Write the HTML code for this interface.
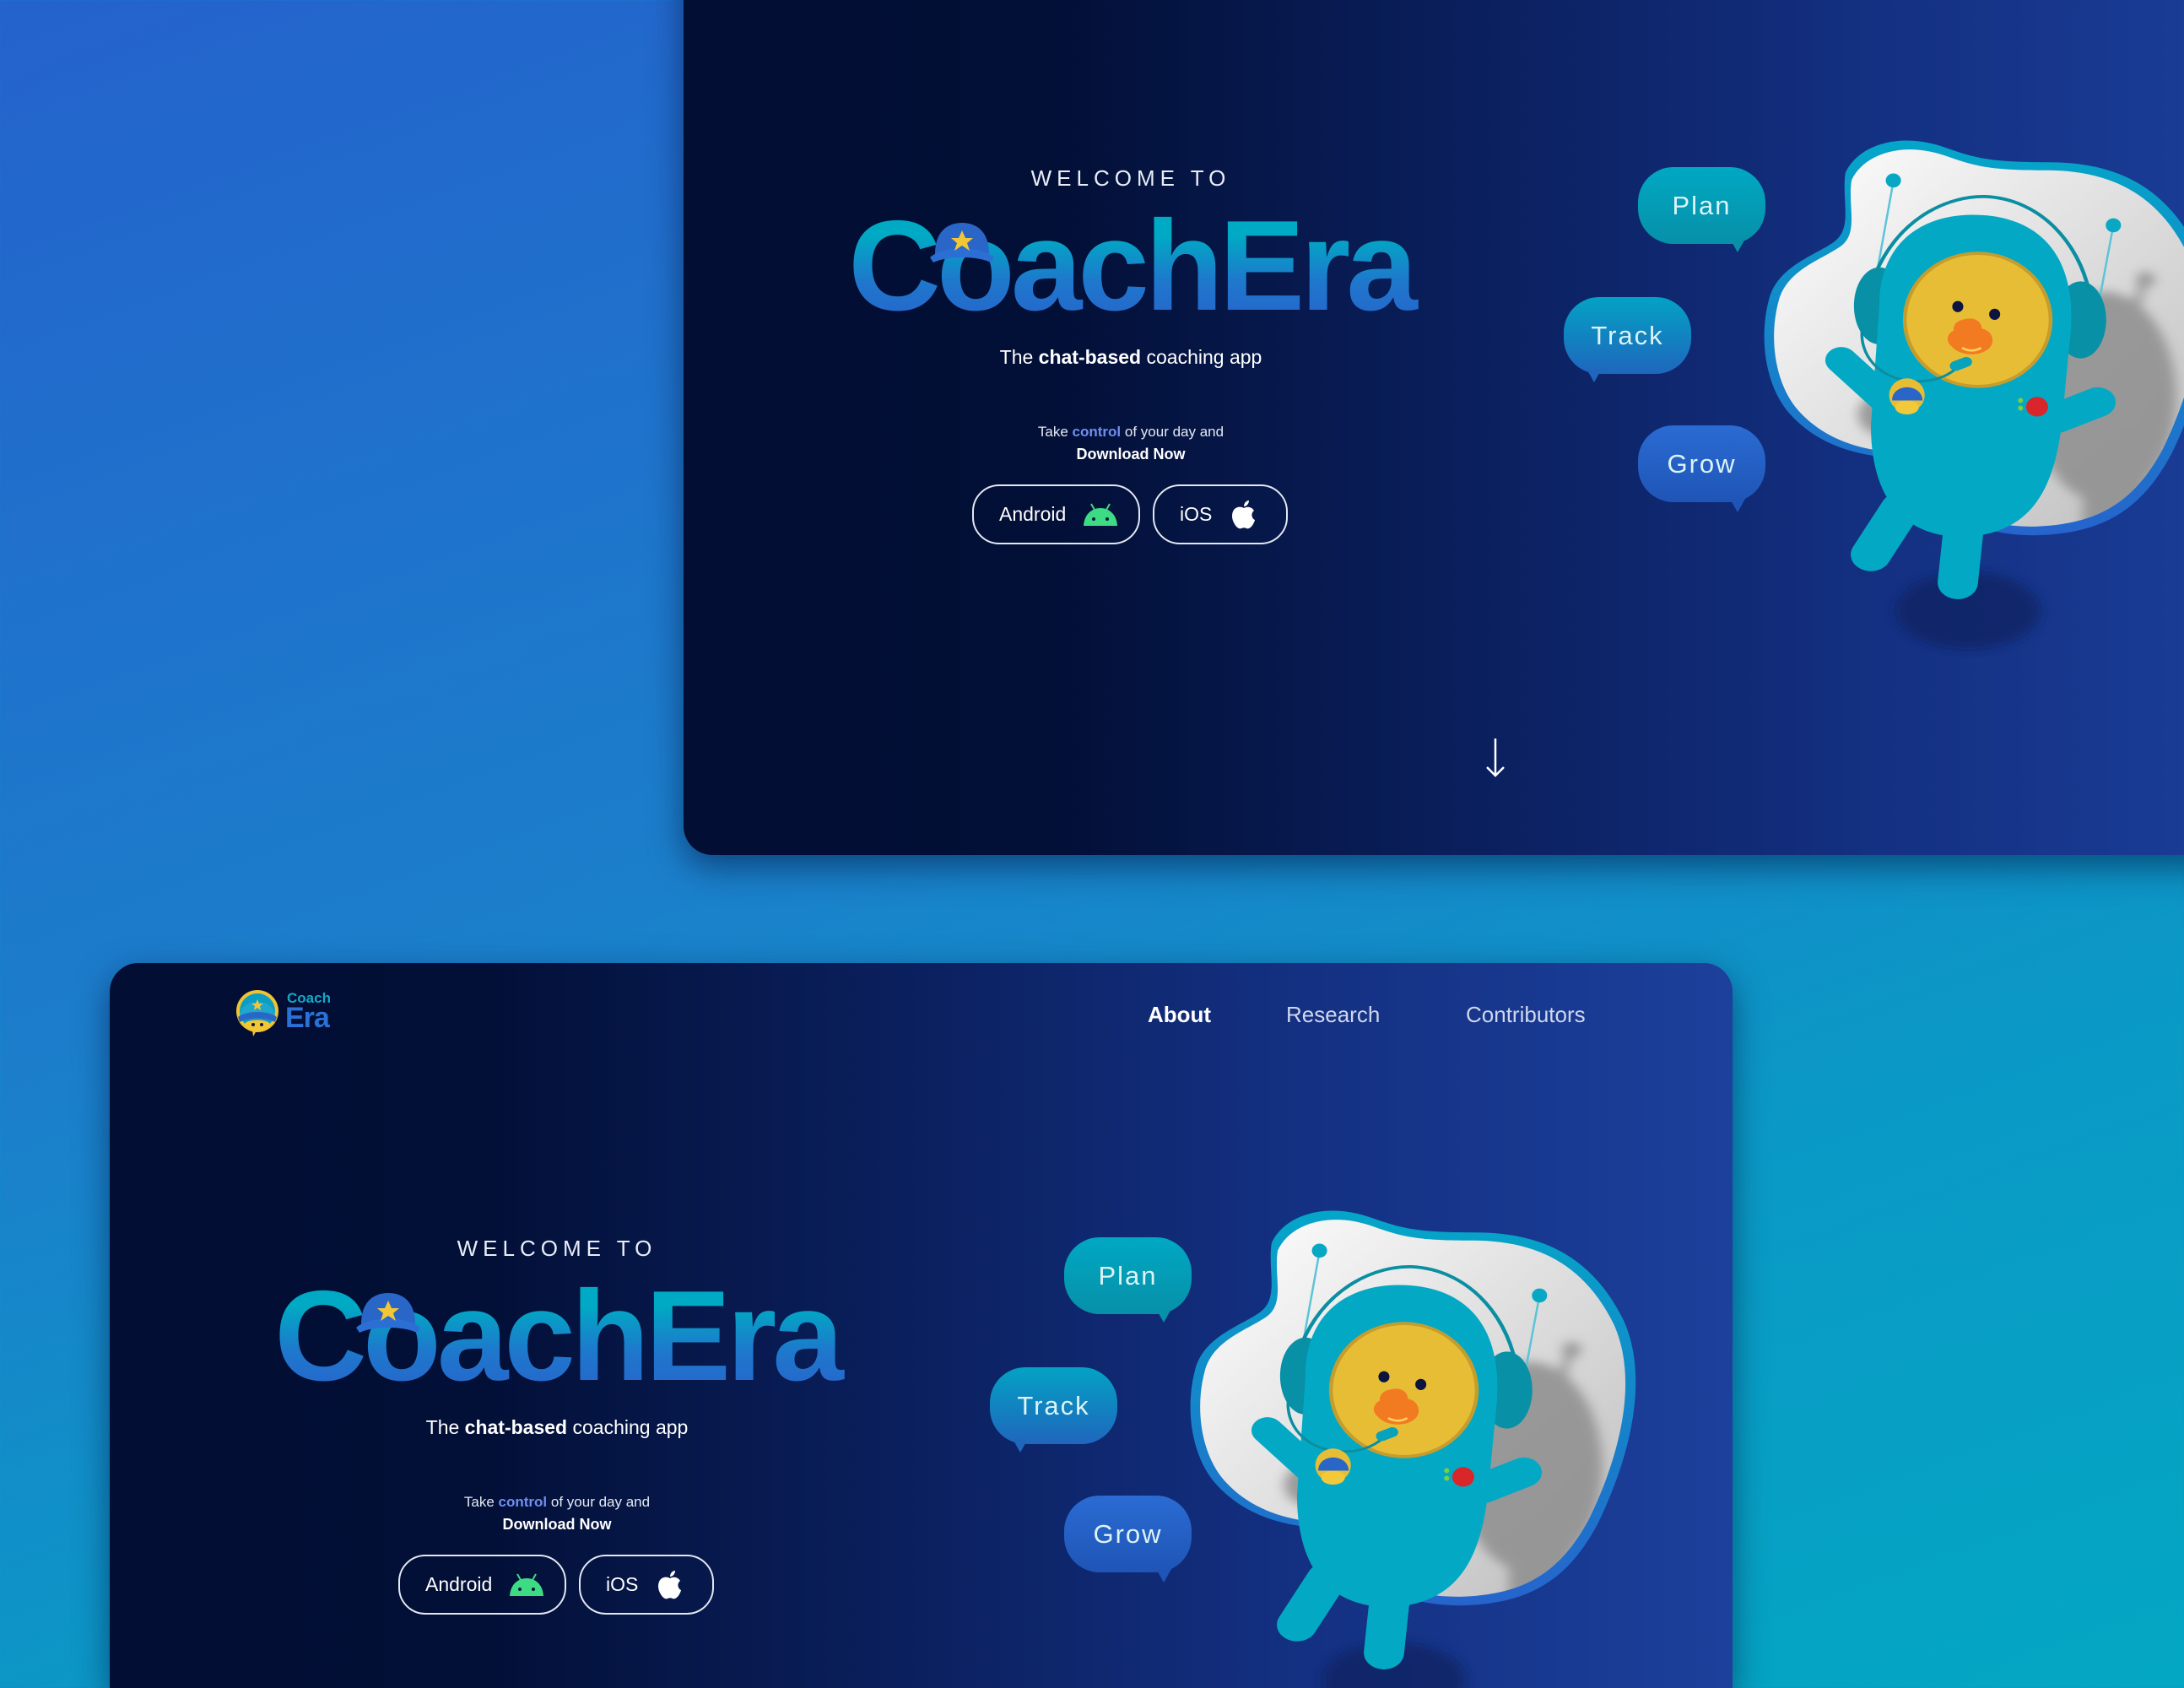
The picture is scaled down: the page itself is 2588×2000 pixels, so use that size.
<!DOCTYPE html>
<html><head><meta charset="utf-8">
<style>
*{margin:0;padding:0;box-sizing:border-box}
html{width:2588px;height:2000px;overflow:hidden}
body{width:2588px;height:2000px;overflow:hidden;position:relative;font-family:"Liberation Sans",sans-serif;
background:linear-gradient(160deg,#2462cc 0%,#1b7fcb 45%,#0b98c6 70%,#03a7c3 100%);}
.card{position:absolute;width:1923px;height:1140px;border-radius:34px;overflow:hidden;
background:linear-gradient(90deg,#020e33 0%,#020f36 22%,#0a1f5c 48%,#132f80 72%,#1c409c 100%);
box-shadow:0 14px 40px rgba(0,20,60,.55);}
.abs{position:absolute}
.c{position:absolute;text-align:center;white-space:nowrap;color:#fff}
.welcome{left:330px;width:400px;top:320px;font-size:26px;letter-spacing:6px;color:#e9edf7;line-height:36px}
.brand{left:130px;width:800px;top:352px;font-size:152px;font-weight:bold;letter-spacing:-5px;line-height:180px;
background:linear-gradient(180deg,#00aac4 30%,#1e78cc 60%,#2a5ccb 100%);-webkit-background-clip:text;background-clip:text;color:transparent}
.tag{left:230px;width:600px;top:536px;font-size:23px;line-height:28px}
.take{left:230px;width:600px;top:628px;font-size:17px;line-height:22px;color:#e5e9f3}
.take b{color:#6f8ff2}
.dl{left:230px;width:600px;top:654px;font-size:18px;font-weight:bold;line-height:22px}
.btn{position:absolute;top:701px;height:71px;border:2px solid #e4e8f2;border-radius:32px;color:#fff;font-size:23px;display:flex;align-items:center}
.bub{position:absolute;width:151px;height:91px;border-radius:42px;color:#dcf3f7;font-size:31px;letter-spacing:2px;display:flex;align-items:center;justify-content:center}
.nav{position:absolute;top:46px;font-size:26px;color:#cfd6ee;line-height:30px}
</style></head><body>

<!-- TOP CARD -->
<div class="card" style="left:810px;top:-127px;">
  <div class="c welcome">WELCOME TO</div>
  <div class="c brand">CoachEra</div>
  <svg class="abs" style="left:292px;top:388px" width="76" height="62" viewBox="0 0 76 62"><path d="M6 40 C6 12 22 3 38 3 C56 3 70 14 70 40 Z" fill="#2a66c8"/><path d="M0 44 C16 30 60 30 76 44 L72 50 C56 42 20 42 4 50Z" fill="#2c6fd4"/><polygon points="38,12 42,21 51,21 44,27 47,36 38,30 29,36 32,27 25,21 34,21" fill="#f3c635"/></svg>
  <div class="c tag">The <b>chat-based</b> coaching app</div>
  <div class="c take">Take <b>control</b> of your day and</div>
  <div class="c dl">Download Now</div>
  <div class="btn" style="left:342px;width:199px"><span style="margin-left:30px">Android</span>
    <svg style="margin-left:20px" width="42" height="28" viewBox="0 0 42 28"><line x1="10" y1="1" x2="14" y2="8" stroke="#3ddc84" stroke-width="2"/><line x1="32" y1="1" x2="28" y2="8" stroke="#3ddc84" stroke-width="2"/><path d="M1 27 C2 12 12 6 21 6 C30 6 40 12 41 27Z" fill="#3ddc84"/><circle cx="13" cy="19" r="2" fill="#0a1640"/><circle cx="29" cy="19" r="2" fill="#0a1640"/></svg></div>
  <div class="btn" style="left:556px;width:160px"><span style="margin-left:30px">iOS</span>
    <svg style="margin-left:22px" width="32" height="36" viewBox="0 0 32 36"><path d="M16 10 C13 8 8 8 5 11 C1 15 1 23 5 29 C8 34 11 35 13 34 C15 33 17 33 19 34 C21 35 24 34 27 29 C28 27 29 25 29 24 C25 22 24 16 28 13 C25 8 19 8 16 10Z" fill="#fff"/><path d="M16 8 C16 4 19 1 22 1 C22 5 19 8 16 8Z" fill="#fff"/></svg></div>
  <svg class="abs" style="left:950px;top:1000px" width="24" height="50" viewBox="0 0 24 50"><line x1="12" y1="2" x2="12" y2="46" stroke="#fff" stroke-width="2.5"/><polyline points="2,36 12,46 22,36" fill="none" stroke="#fff" stroke-width="2.5"/></svg>
  <div class="bub" style="left:1131px;top:325px;background:linear-gradient(180deg,#00a8c3,#0790a8)">Plan</div>
  <svg class="abs" style="left:1240px;top:410px" width="18" height="16"><polygon points="0,0 18,0 9,16" fill="#0790a8"/></svg>
  <div class="bub" style="left:1043px;top:479px;background:linear-gradient(180deg,#03a2c4,#1f66bd)">Track</div>
  <svg class="abs" style="left:1070px;top:564px" width="18" height="16"><polygon points="0,0 18,0 9,16" fill="#1f66bd"/></svg>
  <div class="bub" style="left:1131px;top:631px;background:linear-gradient(180deg,#2a6bd3,#1f55b6)">Grow</div>
  <svg class="abs" style="left:1240px;top:718px" width="18" height="16"><polygon points="0,0 18,0 9,16" fill="#1f55b6"/></svg>
  <svg class="abs mascot" style="left:990px;top:257px" width="854" height="664" viewBox="0 0 1700 1600" preserveAspectRatio="none">
    <defs>
      <linearGradient id="bl" x1="0" y1="0" x2="0" y2="1"><stop offset="0" stop-color="#04a6c8"/><stop offset="1" stop-color="#2664cc"/></linearGradient>
      <linearGradient id="wh" x1="0" y1="0" x2="1" y2="1"><stop offset="0" stop-color="#ffffff"/><stop offset="1" stop-color="#bdbdbd"/></linearGradient>
      <filter id="bf"><feGaussianBlur stdDeviation="14"/></filter>
      <clipPath id="cp"><path transform="translate(1090 660) scale(0.955) translate(-1090 -660)" d="M770 180 C800 100 900 60 1010 110 C1080 140 1120 150 1250 150 C1420 150 1530 230 1600 400 C1660 560 1620 780 1540 980 C1470 1140 1380 1210 1220 1215 C1120 1215 1050 1190 950 1100 L850 990 C780 980 700 950 640 870 C580 790 565 650 590 540 C610 450 690 420 740 380 C790 340 760 260 770 180Z"/></clipPath>
    </defs>
    <ellipse cx="1060" cy="1430" rx="170" ry="110" fill="#0a1a55" opacity=".55" filter="url(#bf)"/>
    <path d="M770 180 C800 100 900 60 1010 110 C1080 140 1120 150 1250 150 C1420 150 1530 230 1600 400 C1660 560 1620 780 1540 980 C1470 1140 1380 1210 1220 1215 C1120 1215 1050 1190 950 1100 L850 990 C780 980 700 950 640 870 C580 790 565 650 590 540 C610 450 690 420 740 380 C790 340 760 260 770 180Z" fill="url(#bl)"/>
    <path transform="translate(1090 660) scale(0.955) translate(-1090 -660)" d="M770 180 C800 100 900 60 1010 110 C1080 140 1120 150 1250 150 C1420 150 1530 230 1600 400 C1660 560 1620 780 1540 980 C1470 1140 1380 1210 1220 1215 C1120 1215 1050 1190 950 1100 L850 990 C780 980 700 950 640 870 C580 790 565 650 590 540 C610 450 690 420 740 380 C790 340 760 260 770 180Z" fill="url(#wh)"/>
    <g clip-path="url(#cp)" fill="#8e8e8e" opacity=".85" filter="url(#bf)">
      <ellipse cx="1380" cy="820" rx="170" ry="300"/>
      <rect x="1330" y="950" width="150" height="320" rx="60"/>
      <line x1="1475" y1="480" x2="1420" y2="720" stroke="#8e8e8e" stroke-width="18"/>
      <circle cx="1478" cy="485" r="22"/>
      <ellipse cx="860" cy="870" rx="60" ry="60"/>
    </g>
    <line x1="883" y1="205" x2="845" y2="460" stroke="#5cc4d8" stroke-width="5"/>
    <ellipse cx="883" cy="202" rx="18" ry="20" fill="#08a8c4"/>
    <line x1="1402" y1="330" x2="1365" y2="570" stroke="#5cc4d8" stroke-width="5"/>
    <ellipse cx="1402" cy="330" rx="18" ry="20" fill="#08a8c4"/>
    <line x1="760" y1="715" x2="860" y2="825" stroke="#03a9c4" stroke-width="75" stroke-linecap="round"/>
    <line x1="1270" y1="880" x2="1365" y2="835" stroke="#03a9c4" stroke-width="85" stroke-linecap="round"/>
    <line x1="900" y1="1140" x2="830" y2="1270" stroke="#03a9c4" stroke-width="95" stroke-linecap="round"/>
    <line x1="1050" y1="1180" x2="1035" y2="1350" stroke="#03a9c4" stroke-width="95" stroke-linecap="round"/>
    <ellipse cx="850" cy="560" rx="60" ry="110" fill="#0890a6"/>
    <ellipse cx="1325" cy="600" rx="60" ry="110" fill="#0890a6"/>
    <path d="M850 560 C850 380 950 300 1070 300 C1230 300 1320 420 1300 650 L1280 900 C1260 1100 1200 1210 1050 1220 C900 1220 830 1100 830 900Z" fill="#03a9c4"/>
    <path d="M840 470 C900 300 1020 245 1100 248 C1230 255 1320 380 1345 520" fill="none" stroke="#0a8ea2" stroke-width="9"/>
    <ellipse cx="1082" cy="600" rx="172" ry="190" fill="#e8bd36" stroke="#c69d2c" stroke-width="9"/>
    <ellipse cx="1035" cy="562" rx="13" ry="16" fill="#0b1540"/>
    <ellipse cx="1122" cy="584" rx="13" ry="16" fill="#0b1540"/>
    <path d="M1045 600 C1070 590 1090 600 1092 625 C1115 630 1125 660 1110 680 C1090 705 1040 705 1020 675 C1005 660 1010 640 1025 630 C1025 615 1030 605 1045 600Z" fill="#f27b22"/>
    <path d="M1045 680 Q1068 695 1090 680" fill="none" stroke="#ffd35a" stroke-width="6"/>
    <path d="M810 620 C800 700 850 770 930 775 C980 778 1010 760 1030 740" fill="none" stroke="#0a8ea2" stroke-width="7"/>
    <rect x="1015" y="712" width="55" height="28" rx="14" fill="#07a2bc" transform="rotate(-25 1042 726)"/>
    <ellipse cx="915" cy="815" rx="42" ry="48" fill="#e8bd36"/>
    <path d="M880 830 C880 780 950 780 952 830Z" fill="#2a66c8"/>
    <ellipse cx="915" cy="850" rx="28" ry="20" fill="#f2c93a"/>
    <ellipse cx="1222" cy="848" rx="26" ry="28" fill="#d8262b"/>
    <ellipse cx="1183" cy="830" rx="6" ry="7" fill="#7bd13b"/>
    <ellipse cx="1183" cy="852" rx="6" ry="7" fill="#7bd13b"/>
  </svg>
</div>

<!-- BOTTOM CARD -->
<div class="card" style="left:130px;top:1141px;height:859px;border-bottom-left-radius:0;border-bottom-right-radius:0;">
  <svg class="abs" style="left:148px;top:30px" width="56" height="58" viewBox="0 0 56 58"><circle cx="27" cy="27" r="25" fill="#f1c232"/><circle cx="27" cy="27" r="21" fill="#0a9ec4"/><path d="M6 34 C6 10 48 10 48 34Z" fill="#1ea6cc"/><path d="M4 34 C14 26 40 26 50 34 L48 40 C36 34 18 34 6 40Z" fill="#2a66c8"/><polygon points="27,13 29,18 34,18 30,21 31,26 27,23 23,26 24,21 20,18 25,18" fill="#f3c635"/><path d="M12 42 C16 36 38 36 42 42 C38 50 30 51 26 50 L22 57 L21 49 C16 48 13 45 12 42Z" fill="#f3c635"/><circle cx="22" cy="43" r="2" fill="#0a1640"/><circle cx="32" cy="43" r="2" fill="#0a1640"/></svg>
  <div class="abs" style="left:210px;top:32px;font-size:17px;font-weight:bold;color:#12a9c9;line-height:20px">Coach</div>
  <div class="abs" style="left:208px;top:46px;font-size:34px;font-weight:bold;color:#2a72d8;line-height:38px;letter-spacing:-1px">Era</div>
  <div class="nav" style="left:1230px;color:#fff;font-weight:bold">About</div>
  <div class="nav" style="left:1394px">Research</div>
  <div class="nav" style="left:1607px">Contributors</div>

  <div class="c welcome">WELCOME TO</div>
  <div class="c brand">CoachEra</div>
  <svg class="abs" style="left:292px;top:388px" width="76" height="62" viewBox="0 0 76 62"><path d="M6 40 C6 12 22 3 38 3 C56 3 70 14 70 40 Z" fill="#2a66c8"/><path d="M0 44 C16 30 60 30 76 44 L72 50 C56 42 20 42 4 50Z" fill="#2c6fd4"/><polygon points="38,12 42,21 51,21 44,27 47,36 38,30 29,36 32,27 25,21 34,21" fill="#f3c635"/></svg>
  <div class="c tag">The <b>chat-based</b> coaching app</div>
  <div class="c take">Take <b>control</b> of your day and</div>
  <div class="c dl">Download Now</div>
  <div class="btn" style="left:342px;width:199px"><span style="margin-left:30px">Android</span>
    <svg style="margin-left:20px" width="42" height="28" viewBox="0 0 42 28"><line x1="10" y1="1" x2="14" y2="8" stroke="#3ddc84" stroke-width="2"/><line x1="32" y1="1" x2="28" y2="8" stroke="#3ddc84" stroke-width="2"/><path d="M1 27 C2 12 12 6 21 6 C30 6 40 12 41 27Z" fill="#3ddc84"/><circle cx="13" cy="19" r="2" fill="#0a1640"/><circle cx="29" cy="19" r="2" fill="#0a1640"/></svg></div>
  <div class="btn" style="left:556px;width:160px"><span style="margin-left:30px">iOS</span>
    <svg style="margin-left:22px" width="32" height="36" viewBox="0 0 32 36"><path d="M16 10 C13 8 8 8 5 11 C1 15 1 23 5 29 C8 34 11 35 13 34 C15 33 17 33 19 34 C21 35 24 34 27 29 C28 27 29 25 29 24 C25 22 24 16 28 13 C25 8 19 8 16 10Z" fill="#fff"/><path d="M16 8 C16 4 19 1 22 1 C22 5 19 8 16 8Z" fill="#fff"/></svg></div>
  <div class="bub" style="left:1131px;top:325px;background:linear-gradient(180deg,#00a8c3,#0790a8)">Plan</div>
  <svg class="abs" style="left:1240px;top:410px" width="18" height="16"><polygon points="0,0 18,0 9,16" fill="#0790a8"/></svg>
  <div class="bub" style="left:1043px;top:479px;background:linear-gradient(180deg,#03a2c4,#1f66bd)">Track</div>
  <svg class="abs" style="left:1070px;top:564px" width="18" height="16"><polygon points="0,0 18,0 9,16" fill="#1f66bd"/></svg>
  <div class="bub" style="left:1131px;top:631px;background:linear-gradient(180deg,#2a6bd3,#1f55b6)">Grow</div>
  <svg class="abs" style="left:1240px;top:718px" width="18" height="16"><polygon points="0,0 18,0 9,16" fill="#1f55b6"/></svg>
  <svg class="abs" style="left:990px;top:257px" width="854" height="664" viewBox="0 0 1700 1600" preserveAspectRatio="none">
    <defs>
      <linearGradient id="bl2" x1="0" y1="0" x2="0" y2="1"><stop offset="0" stop-color="#04a6c8"/><stop offset="1" stop-color="#2664cc"/></linearGradient>
      <linearGradient id="wh2" x1="0" y1="0" x2="1" y2="1"><stop offset="0" stop-color="#ffffff"/><stop offset="1" stop-color="#bdbdbd"/></linearGradient>
      <filter id="bf2"><feGaussianBlur stdDeviation="14"/></filter>
      <clipPath id="cp2"><path transform="translate(1090 660) scale(0.955) translate(-1090 -660)" d="M770 180 C800 100 900 60 1010 110 C1080 140 1120 150 1250 150 C1420 150 1530 230 1600 400 C1660 560 1620 780 1540 980 C1470 1140 1380 1210 1220 1215 C1120 1215 1050 1190 950 1100 L850 990 C780 980 700 950 640 870 C580 790 565 650 590 540 C610 450 690 420 740 380 C790 340 760 260 770 180Z"/></clipPath>
    </defs>
    <ellipse cx="1060" cy="1430" rx="170" ry="110" fill="#0a1a55" opacity=".55" filter="url(#bf2)"/>
    <path d="M770 180 C800 100 900 60 1010 110 C1080 140 1120 150 1250 150 C1420 150 1530 230 1600 400 C1660 560 1620 780 1540 980 C1470 1140 1380 1210 1220 1215 C1120 1215 1050 1190 950 1100 L850 990 C780 980 700 950 640 870 C580 790 565 650 590 540 C610 450 690 420 740 380 C790 340 760 260 770 180Z" fill="url(#bl2)"/>
    <path transform="translate(1090 660) scale(0.955) translate(-1090 -660)" d="M770 180 C800 100 900 60 1010 110 C1080 140 1120 150 1250 150 C1420 150 1530 230 1600 400 C1660 560 1620 780 1540 980 C1470 1140 1380 1210 1220 1215 C1120 1215 1050 1190 950 1100 L850 990 C780 980 700 950 640 870 C580 790 565 650 590 540 C610 450 690 420 740 380 C790 340 760 260 770 180Z" fill="url(#wh2)"/>
    <g clip-path="url(#cp2)" fill="#8e8e8e" opacity=".85" filter="url(#bf2)">
      <ellipse cx="1380" cy="820" rx="170" ry="300"/>
      <rect x="1330" y="950" width="150" height="320" rx="60"/>
      <line x1="1475" y1="480" x2="1420" y2="720" stroke="#8e8e8e" stroke-width="18"/>
      <circle cx="1478" cy="485" r="22"/>
      <ellipse cx="860" cy="870" rx="60" ry="60"/>
    </g>
    <line x1="883" y1="205" x2="845" y2="460" stroke="#5cc4d8" stroke-width="5"/>
    <ellipse cx="883" cy="202" rx="18" ry="20" fill="#08a8c4"/>
    <line x1="1402" y1="330" x2="1365" y2="570" stroke="#5cc4d8" stroke-width="5"/>
    <ellipse cx="1402" cy="330" rx="18" ry="20" fill="#08a8c4"/>
    <line x1="760" y1="715" x2="860" y2="825" stroke="#03a9c4" stroke-width="75" stroke-linecap="round"/>
    <line x1="1270" y1="880" x2="1365" y2="835" stroke="#03a9c4" stroke-width="85" stroke-linecap="round"/>
    <line x1="900" y1="1140" x2="830" y2="1270" stroke="#03a9c4" stroke-width="95" stroke-linecap="round"/>
    <line x1="1050" y1="1180" x2="1035" y2="1350" stroke="#03a9c4" stroke-width="95" stroke-linecap="round"/>
    <ellipse cx="850" cy="560" rx="60" ry="110" fill="#0890a6"/>
    <ellipse cx="1325" cy="600" rx="60" ry="110" fill="#0890a6"/>
    <path d="M850 560 C850 380 950 300 1070 300 C1230 300 1320 420 1300 650 L1280 900 C1260 1100 1200 1210 1050 1220 C900 1220 830 1100 830 900Z" fill="#03a9c4"/>
    <path d="M840 470 C900 300 1020 245 1100 248 C1230 255 1320 380 1345 520" fill="none" stroke="#0a8ea2" stroke-width="9"/>
    <ellipse cx="1082" cy="600" rx="172" ry="190" fill="#e8bd36" stroke="#c69d2c" stroke-width="9"/>
    <ellipse cx="1035" cy="562" rx="13" ry="16" fill="#0b1540"/>
    <ellipse cx="1122" cy="584" rx="13" ry="16" fill="#0b1540"/>
    <path d="M1045 600 C1070 590 1090 600 1092 625 C1115 630 1125 660 1110 680 C1090 705 1040 705 1020 675 C1005 660 1010 640 1025 630 C1025 615 1030 605 1045 600Z" fill="#f27b22"/>
    <path d="M1045 680 Q1068 695 1090 680" fill="none" stroke="#ffd35a" stroke-width="6"/>
    <path d="M810 620 C800 700 850 770 930 775 C980 778 1010 760 1030 740" fill="none" stroke="#0a8ea2" stroke-width="7"/>
    <rect x="1015" y="712" width="55" height="28" rx="14" fill="#07a2bc" transform="rotate(-25 1042 726)"/>
    <ellipse cx="915" cy="815" rx="42" ry="48" fill="#e8bd36"/>
    <path d="M880 830 C880 780 950 780 952 830Z" fill="#2a66c8"/>
    <ellipse cx="915" cy="850" rx="28" ry="20" fill="#f2c93a"/>
    <ellipse cx="1222" cy="848" rx="26" ry="28" fill="#d8262b"/>
    <ellipse cx="1183" cy="830" rx="6" ry="7" fill="#7bd13b"/>
    <ellipse cx="1183" cy="852" rx="6" ry="7" fill="#7bd13b"/>
  </svg>
</div>
</body></html>
